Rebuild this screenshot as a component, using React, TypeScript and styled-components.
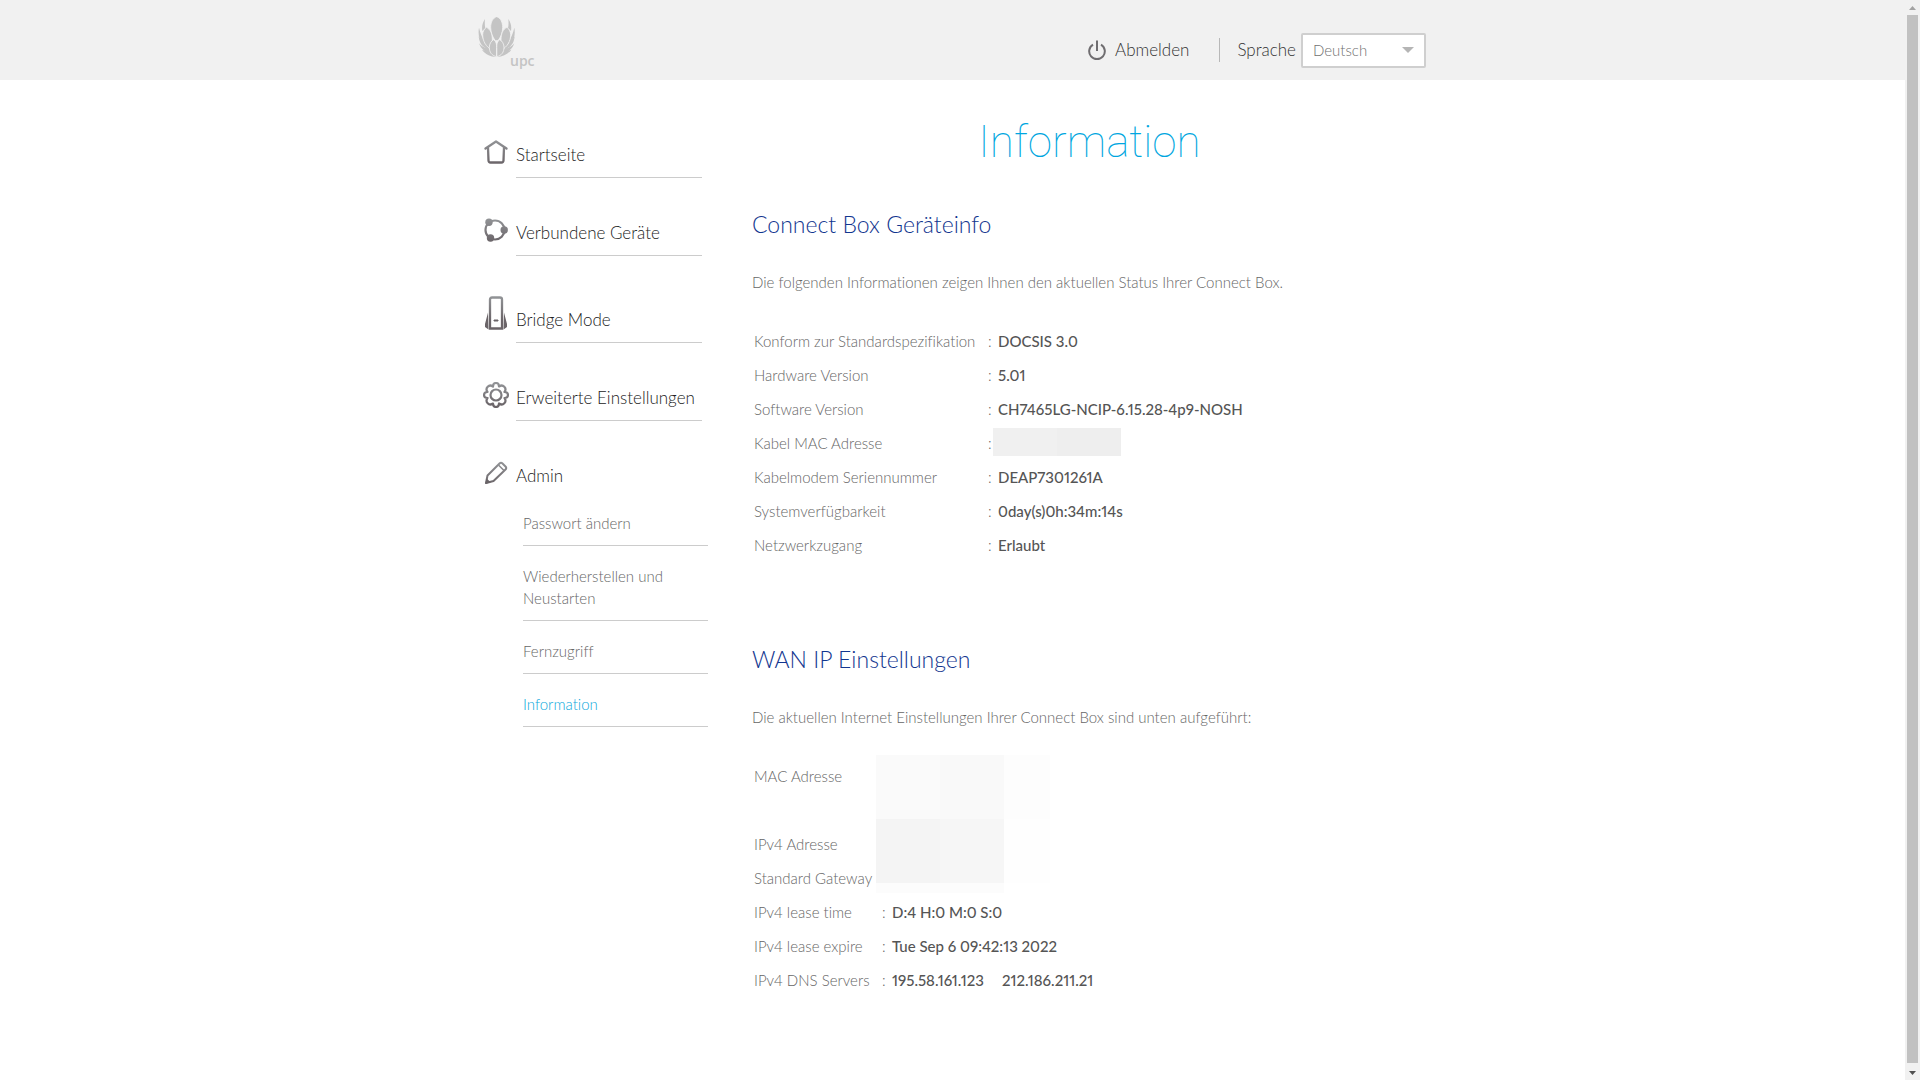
import React from 'react';
import styled, { createGlobalStyle } from 'styled-components';

const GlobalStyle = createGlobalStyle`
  *, *::before, *::after { box-sizing: border-box; }
  body {
    margin: 0;
    background: #fff;
    color: #666;
    font: 300 15px/22px Lato, "Noto Sans", sans-serif;
    font-variant-ligatures: none;
  }
`;

const Shell = styled.div`
  display: flex;
  min-height: 100vh;
`;

const Page = styled.div`
  flex: 1;
  min-width: 0;
`;

const Container = styled.div`
  max-width: 949px;
  margin: 0 auto;
`;

/* ---------- header ---------- */

const Header = styled.header`
  background: #f1f1f1;
`;

const HeaderInner = styled(Container)`
  display: flex;
  justify-content: space-between;
  height: 80px;
  padding-right: 1px;
`;

const Logo = styled.a`
  display: flex;
  align-items: flex-start;
  padding-top: 17px;
  color: #c4c4c4;
  text-decoration: none;
`;

const LogoText = styled.span`
  margin: 35px 0 0 -5px;
  font: 600 14px/18px "Open Sans", sans-serif;
`;

const HeaderTools = styled.div`
  display: flex;
  align-items: center;
  padding-top: 20px;
  color: #333;
  font-size: 17px;
`;

const LogoutButton = styled.button`
  display: flex;
  align-items: center;
  gap: 9px;
  padding: 0;
  border: 0;
  background: none;
  color: inherit;
  font: inherit;
  cursor: pointer;
`;

const Divider = styled.span`
  width: 1px;
  height: 24px;
  margin: 0 17px 0 30px;
  background: #b8b8b8;
`;

const SelectWrap = styled.div`
  display: grid;
  align-items: center;
  width: 125px;
  margin-left: 5px;

  > * { grid-area: 1 / 1; }
  > svg { justify-self: end; margin-right: 12px; pointer-events: none; }
`;

const Select = styled.select`
  appearance: none;
  width: 100%;
  height: 35px;
  padding: 0 30px 0 10px;
  border: 2px solid #cfcfcf;
  border-radius: 2px;
  background: #fff;
  color: #707070;
  font: 300 15px/22px Lato, sans-serif;
`;

/* ---------- side navigation ---------- */

const Columns = styled(Container)`
  display: grid;
  grid-template-columns: 274px minmax(0, 1fr);
`;

const Sidebar = styled.nav`
  padding: 20px 0 0 5px;
`;

const List = styled.ul`
  margin: 0;
  padding: 0;
  list-style: none;
`;

const NavLink = styled.a`
  display: grid;
  grid-template-columns: 26px 186px;
  column-gap: 7px;
  align-items: end;
  padding-top: 39px;
  color: #222;
  font-size: 17px;
  line-height: 24px;
  text-decoration: none;
`;

const NavIcon = styled.span<{ $tall?: boolean }>`
  display: flex;
  align-items: center;
  justify-content: center;
  height: ${({ $tall }) => ($tall ? 35 : 26)}px;
  margin-bottom: 13px;
`;

const NavLabel = styled.span<{ $plain?: boolean }>`
  padding-bottom: 10px;
  border-bottom: 1px solid ${({ $plain }) => ($plain ? 'transparent' : '#ccc')};
`;

const SubList = styled(List)`
  width: 225px;
  padding-left: 40px;
`;

const SubLink = styled.a<{ $active?: boolean }>`
  display: block;
  padding: 19px 0 11px;
  border-bottom: 1px solid #ccc;
  color: ${({ $active }) => ($active ? '#0ba8dc' : '#666')};
  text-decoration: none;

  li:first-child > & { padding-top: 13px; }
`;

/* ---------- content ---------- */

const Content = styled.main`
  padding-top: 32px;
`;

const Title = styled.h1`
  margin: 0;
  color: #00a6e0;
  font: 100 44px/60px Roboto, sans-serif;
  text-align: center;
`;

const Section = styled.section`
  margin-top: 37px;

  & + & { margin-top: 82px; }
`;

const Heading = styled.h2`
  margin: 0 0 32px;
  color: #12368f;
  font-size: 23px;
  font-weight: 300;
  line-height: 30px;
`;

const Intro = styled.p`
  margin: 0 0 31px;
`;

const TableWrap = styled.div`
  position: relative;
`;

const Table = styled.table<{ $labelWidth: number }>`
  border-collapse: collapse;
  line-height: 34px;

  th {
    width: ${({ $labelWidth }) => $labelWidth}px;
    padding: 0 0 0 2px;
    font-weight: 300;
    text-align: left;
    white-space: nowrap;
  }
  td {
    height: 34px;
    padding: 0;
    color: #555;
    font-weight: 500;
    font-variant-numeric: proportional-nums;
  }
  td:nth-child(2) {
    width: 10px;
    color: #666;
    font-weight: 300;
  }
`;

const Server = styled.span`
  & + & { margin-left: 18px; }
`;

const Mask = styled.div<{ $left: number; $top: number; $columns: string; $rows: string }>`
  position: absolute;
  left: ${({ $left }) => $left}px;
  top: ${({ $top }) => $top}px;
  display: grid;
  grid-template-columns: ${({ $columns }) => $columns};
  grid-template-rows: ${({ $rows }) => $rows};
`;

const MaskTile = styled.span<{ $tone: string }>`
  background: ${({ $tone }) => $tone};
`;

/* ---------- scroll rail ---------- */

const Rail = styled.div`
  position: sticky;
  top: 0;
  display: flex;
  flex-direction: column;
  align-items: center;
  width: 15px;
  height: 100vh;
  background: #f1f1f1;
`;

const RailEnd = styled.span`
  display: flex;
  align-items: center;
  justify-content: center;
  height: 15px;
`;

const RailThumb = styled.span`
  flex: 1;
  width: 11px;
  margin-bottom: 2px;
  background: #c1c1c1;
`;

/* ---------- drawings ---------- */

const IconGradient = ({ id }: { id: string }) => (
  <defs>
    <linearGradient id={id} gradientUnits="userSpaceOnUse" x1="0" y1="0" x2="0" y2="24">
      <stop offset="0" stopColor="#939598" />
      <stop offset="1" stopColor="#6a6468" />
    </linearGradient>
  </defs>
);

const Flower = () => (
  <svg width="37" height="40" viewBox="52 52 111 120" fill="#c4c4c4" aria-hidden="true">
    <path d="M73 58c-8 12-10 22-8 36l9-8c-2-10-2-18-1-28zM143 58c8 12 10 22 8 36l-9-8c2-10 2-18 1-28z" />
    <path d="M55 84c-3 17-1 34 10 48l8-4c-9-14-14-28-18-44zM161 84c3 17 1 34-10 48l-8-4c9-14 14-28 18-44z" />
    <path d="M54 110c2 20 10 32 30 40l4-12c-16-5-26-12-34-28zM162 110c-2 20-10 32-30 40l-4-12c16-5 26-12 34-28z" />
    <path d="M55 131c6 18 18 27 41 33l4-16c-20 0-34-4-45-17zM161 131c-6 18-18 27-41 33l-4-16c20 0 34-4 45-17z" />
    <path d="M64 150c10 14 24 21 44 22 20-1 34-8 44-22-12 5-26 6-44 6s-32-1-44-6z" />
    <g stroke="#f1f1f1" strokeWidth="2.5">
      <path d="M108 51c12 4 18 17 18 32 0 16-6 30-14 40h-8c-8-10-14-24-14-40 0-15 6-28 18-32z" />
      <path d="M77 83c13 6 18 20 18 38l-1 30c-18-9-28-27-28-46 0-9 5-18 11-22zM139 83c-13 6-18 20-18 38l1 30c18-9 28-27 28-46 0-9-5-18-11-22z" />
      <path d="M99 120c8 5 9 14 9 24v27c-15-3-22-14-22-28 0-10 5-19 13-23zM117 120c-8 5-9 14-9 24v27c15-3 22-14 22-28 0-10-5-19-13-23z" />
    </g>
  </svg>
);

const PowerIcon = () => (
  <svg width="18" height="21" viewBox="0 0 18 21" fill="none" stroke="#6f6d70" strokeWidth="2" aria-hidden="true">
    <path d="M5 4.600A7.800 7.800 0 1 0 13 4.600M9 0.500V11" />
  </svg>
);

const HomeIcon = () => (
  <svg width="24" height="24" viewBox="0 0 24 24" fill="none" stroke="url(#home)" strokeWidth="2.300" strokeLinejoin="round" strokeLinecap="round" aria-hidden="true">
    <IconGradient id="home" />
    <path d="M1.500 8.500L12 1.500l10.500 7M4 7.500L4.500 20.500Q4.600 22.500 6.500 22.500H17.500Q19.400 22.500 19.500 20.500L20 7.500" />
  </svg>
);

const DevicesIcon = () => (
  <svg width="24" height="24" viewBox="0 0 24 24" fill="none" stroke="url(#devices)" strokeWidth="2.200" aria-hidden="true">
    <IconGradient id="devices" />
    <circle cx="11" cy="12" r="9.500" />
    <g fill="url(#devices)" stroke="none">
      <circle cx="5" cy="4.200" r="3.700" />
      <circle cx="20.200" cy="12" r="3.700" />
      <circle cx="6.500" cy="20" r="3.700" />
    </g>
  </svg>
);

const BridgeIcon = () => (
  <svg width="22" height="34" viewBox="0 0 22 34" fill="none" stroke="url(#bridge)" strokeWidth="2.300" aria-hidden="true">
    <IconGradient id="bridge" />
    <path d="M5 32.500V3.500Q5 1.500 7 1.500H15Q17 1.500 17 3.500V32.500Z" />
    <path d="M9 24h4v1H9Z" fill="#6a6468" stroke="#6a6468" strokeWidth="1" />
    <path d="M3 16.500L0 28V31L3.500 33.500ZM19 16.500L22 28V31L18.500 33.500Z" fill="#6a6468" stroke="none" />
  </svg>
);

const GearIcon = () => (
  <svg width="26" height="26" viewBox="0 0 26 26" fill="none" stroke="url(#gear)" strokeWidth="2.200" strokeLinejoin="round" aria-hidden="true">
    <IconGradient id="gear" />
    <circle cx="13" cy="13" r="5.500" />
    <path d="M10 4.500Q10 1 13 1T16 4.500Q19 2.400 21.300 4.700T21.500 10Q25 10 25 13T21.500 16Q23.600 19 21.300 21.300T16 21.500Q16 25 13 25T10 21.500Q7 23.600 4.700 21.300T4.500 16Q1 16 1 13T4.500 10Q2.400 7 4.700 4.700T10 4.500Z" />
  </svg>
);

const PencilIcon = () => (
  <svg width="24" height="24" viewBox="0 0 24 24" fill="none" stroke="url(#pencil)" strokeWidth="2" strokeLinejoin="round" aria-hidden="true">
    <IconGradient id="pencil" />
    <path d="M2 22L3.500 14.500L15.500 2.500Q17 1 18.500 2.500L21.500 5.500Q23 7 21.500 8.500L9.500 20Z" />
    <path d="M14.500 4L20 9.500" strokeWidth="1.500" />
    <path d="M1.200 23L2.600 17.500L6.800 21.300Z" fill="#6a6468" stroke="none" />
  </svg>
);

const Triangle = ({ points, color, width, height }: { points: string; color: string; width: number; height: number }) => (
  <svg width={width} height={height} viewBox={`0 0 ${width} ${height}`} fill={color} aria-hidden="true">
    <polygon points={points} />
  </svg>
);

/* ---------- data ---------- */

const navItems = [
  { label: 'Startseite', icon: <HomeIcon /> },
  { label: 'Verbundene Geräte', icon: <DevicesIcon /> },
  { label: 'Bridge Mode', icon: <BridgeIcon />, tall: true },
  { label: 'Erweiterte Einstellungen', icon: <GearIcon /> },
  {
    label: 'Admin',
    icon: <PencilIcon />,
    children: ['Passwort ändern', 'Wiederherstellen und Neustarten', 'Fernzugriff', 'Information'],
  },
];

type Row = { label: string; value?: string[]; hidden?: boolean };

const deviceRows: Row[] = [
  { label: 'Konform zur Standardspezifikation', value: ['DOCSIS 3.0'] },
  { label: 'Hardware Version', value: ['5.01'] },
  { label: 'Software Version', value: ['CH7465LG-NCIP-6.15.28-4p9-NOSH'] },
  { label: 'Kabel MAC Adresse' },
  { label: 'Kabelmodem Seriennummer', value: ['DEAP7301261A'] },
  { label: 'Systemverfügbarkeit', value: ['0day(s)0h:34m:14s'] },
  { label: 'Netzwerkzugang', value: ['Erlaubt'] },
];

const wanRows: Row[] = [
  { label: 'MAC Adresse', hidden: true },
  { label: '', hidden: true },
  { label: 'IPv4 Adresse', hidden: true },
  { label: 'Standard Gateway', hidden: true },
  { label: 'IPv4 lease time', value: ['D:4 H:0 M:0 S:0'] },
  { label: 'IPv4 lease expire', value: ['Tue Sep 6 09:42:13 2022'] },
  { label: 'IPv4 DNS Servers', value: ['195.58.161.123', '212.186.211.21'] },
];

const InfoTable = ({ rows, labelWidth }: { rows: Row[]; labelWidth: number }) => (
  <Table $labelWidth={labelWidth}>
    <tbody>
      {rows.map((row, i) => (
        <tr key={i}>
          <th scope="row">{row.label}</th>
          <td>{row.hidden ? '' : ':'}</td>
          <td>{row.value?.map((v) => <Server key={v}>{v}</Server>)}</td>
        </tr>
      ))}
    </tbody>
  </Table>
);

const wanTones = ['#fafafa', '#f9f9f9', '#fdfdfd', '#f4f4f4', '#f6f6f6', '#fefefe', '#fcfcfc', '#fcfcfc'];

export default function App() {
  return (
    <>
      <GlobalStyle />
      <Shell>
        <Page>
          <Header>
            <HeaderInner>
              <Logo href="#">
                <Flower />
                <LogoText>upc</LogoText>
              </Logo>
              <HeaderTools>
                <LogoutButton type="button">
                  <PowerIcon />
                  Abmelden
                </LogoutButton>
                <Divider />
                <label htmlFor="language">Sprache</label>
                <SelectWrap>
                  <Select id="language" defaultValue="Deutsch">
                    <option>Deutsch</option>
                    <option>English</option>
                  </Select>
                  <Triangle points="0,0 12,0 6,6" color="#b5b5b5" width={12} height={6} />
                </SelectWrap>
              </HeaderTools>
            </HeaderInner>
          </Header>

          <Columns>
            <Sidebar>
              <List>
                {navItems.map((item) => (
                  <li key={item.label}>
                    <NavLink href="#">
                      <NavIcon $tall={item.tall}>{item.icon}</NavIcon>
                      <NavLabel $plain={!!item.children}>{item.label}</NavLabel>
                    </NavLink>
                    {item.children && (
                      <SubList>
                        {item.children.map((child) => (
                          <li key={child}>
                            <SubLink href="#" $active={child === 'Information'}>{child}</SubLink>
                          </li>
                        ))}
                      </SubList>
                    )}
                  </li>
                ))}
              </List>
            </Sidebar>

            <Content>
              <Title>Information</Title>
              <Section>
                <Heading>Connect Box Geräteinfo</Heading>
                <Intro>Die folgenden Informationen zeigen Ihnen den aktuellen Status Ihrer Connect Box.</Intro>
                <TableWrap>
                  <InfoTable rows={deviceRows} labelWidth={236} />
                  <Mask $left={241} $top={104} $columns="64px 64px" $rows="28px">
                    <MaskTile $tone="#f0f0f0" />
                    <MaskTile $tone="#eeeeee" />
                  </Mask>
                </TableWrap>
              </Section>
              <Section>
                <Heading>WAN IP Einstellungen</Heading>
                <Intro>Die aktuellen Internet Einstellungen Ihrer Connect Box sind unten aufgeführt:</Intro>
                <TableWrap>
                  <InfoTable rows={wanRows} labelWidth={130} />
                  <Mask $left={124} $top={-4} $columns="64px 64px 46px" $rows="64px 64px 10px">
                    {wanTones.map((tone, i) => <MaskTile key={i} $tone={tone} />)}
                  </Mask>
                </TableWrap>
              </Section>
            </Content>
          </Columns>
        </Page>

        <Rail aria-hidden="true">
          <RailEnd><Triangle points="0,4 7,4 3.5,0" color="#a3a3a3" width={7} height={4} /></RailEnd>
          <RailThumb />
          <RailEnd><Triangle points="0,0 7,0 3.5,4" color="#505050" width={7} height={4} /></RailEnd>
        </Rail>
      </Shell>
    </>
  );
}
